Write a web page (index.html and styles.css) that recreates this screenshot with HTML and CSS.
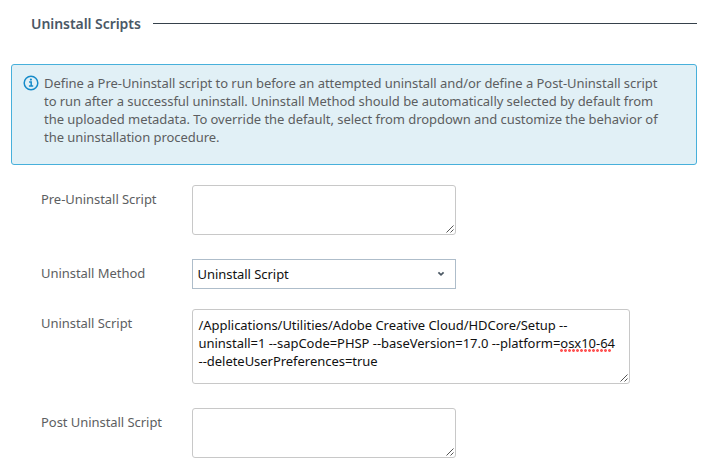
FILE: index.html
```html
<!DOCTYPE html>
<html lang="en">
<head>
<meta charset="utf-8">
<title>Uninstall Scripts</title>
<link rel="stylesheet" href="styles.css">
</head>
<body>
<main class="panel">
  <h1 class="heading"><span>Uninstall Scripts</span></h1>
  <section class="notice">
    <svg class="info" viewBox="0 0 16 16" width="16" height="16"><circle cx="8" cy="8" r="6.8"/><path d="M6.1 7h2.1v4.3M5.9 11.1h4.3"/><circle class="dot" cx="7.9" cy="4.6" r="1.1"/></svg>
    <p>Define a Pre-Uninstall script to run before an attempted uninstall and/or define a Post-Uninstall script<br>to run after a successful uninstall. Uninstall Method should be automatically selected by default from<br>the uploaded metadata. To override the default, select from dropdown and customize the behavior of<br>the uninstallation procedure.</p>
  </section>
  <form class="form">
    <div class="row"><span class="label">Pre-Uninstall Script</span><div class="box"><svg class="grip" viewBox="0 0 8 8"><path d="M.5 7.5l7-7M4.5 7.5l3-3"/></svg></div></div>
    <div class="row method"><span class="label">Uninstall Method</span><div class="select"><span>Uninstall Script</span><svg viewBox="0 0 8 6" width="8" height="6"><path d="M1.4 1.3L4 3.9l2.6-2.6"/></svg></div></div>
    <div class="row script"><span class="label">Uninstall Script</span><div class="box wide">/Applications/Utilities/Adobe Creative Cloud/HDCore/Setup --<br>uninstall=1 --sapCode=PHSP --baseVersion=17.0 --platform=<span class="spell">osx10-64</span><br>--deleteUserPreferences=true<svg class="grip" viewBox="0 0 8 8"><path d="M.5 7.5l7-7M4.5 7.5l3-3"/></svg></div></div>
    <div class="row"><span class="label">Post Uninstall Script</span><div class="box"><svg class="grip" viewBox="0 0 8 8"><path d="M.5 7.5l7-7M4.5 7.5l3-3"/></svg></div></div>
  </form>
</main>
</body>
</html>
```
FILE: styles.css
```css
* { box-sizing: border-box; }
body { margin: 0; background: #fff; font: 13px/18px "Noto Sans", sans-serif; letter-spacing: -.05px; color: #5c5e61; }
.panel { width: 708px; height: 468px; padding: 13px 11px 0; overflow: hidden; }
.heading { display: flex; align-items: center; gap: 12px; height: 21px; margin: 0 0 30px 20px; font-size: 14px; line-height: 21px; font-weight: 600; letter-spacing: -.06px; color: #4a5866; }
.heading::after { content: ""; flex: 1; height: 1px; background: #36414b; }
.notice { display: flex; gap: 5px; height: 101px; padding: 9px 11px; border: 1px solid #47b0db; border-radius: 3px; background: #e1f0f6; }
.notice p { margin: 0; white-space: nowrap; letter-spacing: -.05px; }
.info { flex: none; margin-top: 1px; margin-left: -.5px; margin-right: .5px; fill: none; stroke: #168bc9; stroke-width: 1.5; }
.info .dot { fill: #168bc9; stroke: none; }
.form { padding: 20px 0 0 30px; }
.row { display: flex; height: 50px; margin-bottom: 24px; }
.label { width: 151px; padding-top: 5px; }
.box { position: relative; width: 264px; height: 50px; border: 1px solid #c8c8c8; border-radius: 3px; }
.wide { width: 438px; height: 75px; padding: 6px 5.5px; color: #111; white-space: nowrap; letter-spacing: -.035px; }
.method { height: 30px; margin-bottom: 20px; }
.script { height: 75px; }
.select { display: flex; align-items: center; justify-content: space-between; width: 264px; height: 30px; padding: 0 10px 0 4.5px; border: 1px solid #aebdca; color: #111; }
.select path { fill: none; stroke: #4b5864; stroke-width: 1.7; }
.grip { position: absolute; right: 1px; bottom: 1px; width: 8px; height: 8px; fill: none; stroke: #555; }
.spell { position: relative; }
.spell::after { content: ""; position: absolute; left: 0; bottom: 0; width: 51px; height: 3px; background: radial-gradient(circle at 1.5px 1.5px, #f55 1.1px, transparent 1.7px) 0 0 / 4px 3px repeat-x; }
```
